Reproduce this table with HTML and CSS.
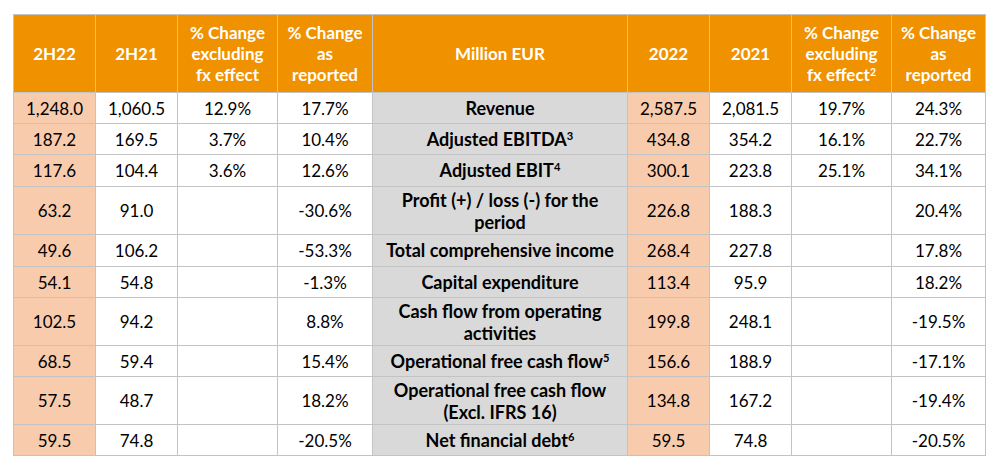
FILE: index.html
```html
<!DOCTYPE html>
<html>
<head>
<meta charset="utf-8">
<link rel="stylesheet" href="styles.css">
</head>
<body>
<div class="wrap">
<table class="fin">
<colgroup>
<col class="c-num"><col class="c-num"><col class="c-fx"><col class="c-rep">
<col class="c-label">
<col class="c-num"><col class="c-num"><col class="c-fx"><col class="c-rep2">
</colgroup>
<thead>
<tr>
<th>2H22</th><th>2H21</th><th>% Change<br>excluding<br>fx effect</th><th>% Change<br>as<br>reported</th>
<th>Million EUR</th>
<th>2022</th><th>2021</th><th>% Change<br>excluding<br>fx effect<sup>2</sup></th><th>% Change<br>as<br>reported</th>
</tr>
</thead>
<tbody>
<tr class="r1"><td class="hl">1,248.0</td><td>1,060.5</td><td>12.9%</td><td>17.7%</td><td class="lbl">Revenue</td><td class="hl">2,587.5</td><td>2,081.5</td><td>19.7%</td><td>24.3%</td></tr>
<tr class="r1"><td class="hl">187.2</td><td>169.5</td><td>3.7%</td><td>10.4%</td><td class="lbl">Adjusted EBITDA<sup>3</sup></td><td class="hl">434.8</td><td>354.2</td><td>16.1%</td><td>22.7%</td></tr>
<tr class="r1b"><td class="hl">117.6</td><td>104.4</td><td>3.6%</td><td>12.6%</td><td class="lbl">Adjusted EBIT<sup>4</sup></td><td class="hl">300.1</td><td>223.8</td><td>25.1%</td><td>34.1%</td></tr>
<tr class="r2"><td class="hl">63.2</td><td>91.0</td><td></td><td>-30.6%</td><td class="lbl">Profit (+) / loss (-) for the period</td><td class="hl">226.8</td><td>188.3</td><td></td><td>20.4%</td></tr>
<tr class="r1b"><td class="hl">49.6</td><td>106.2</td><td></td><td>-53.3%</td><td class="lbl">Total comprehensive income</td><td class="hl">268.4</td><td>227.8</td><td></td><td>17.8%</td></tr>
<tr class="r1"><td class="hl">54.1</td><td>54.8</td><td></td><td>-1.3%</td><td class="lbl">Capital expenditure</td><td class="hl">113.4</td><td>95.9</td><td></td><td>18.2%</td></tr>
<tr class="r2"><td class="hl">102.5</td><td>94.2</td><td></td><td>8.8%</td><td class="lbl">Cash flow from operating activities</td><td class="hl">199.8</td><td>248.1</td><td></td><td>-19.5%</td></tr>
<tr class="r1"><td class="hl">68.5</td><td>59.4</td><td></td><td>15.4%</td><td class="lbl">Operational free cash flow<sup>5</sup></td><td class="hl">156.6</td><td>188.9</td><td></td><td>-17.1%</td></tr>
<tr class="r2"><td class="hl">57.5</td><td>48.7</td><td></td><td>18.2%</td><td class="lbl">Operational free cash flow (Excl. IFRS 16)</td><td class="hl">134.8</td><td>167.2</td><td></td><td>-19.4%</td></tr>
<tr class="r1"><td class="hl">59.5</td><td>74.8</td><td></td><td>-20.5%</td><td class="lbl">Net financial debt<sup>6</sup></td><td class="hl">59.5</td><td>74.8</td><td></td><td>-20.5%</td></tr>
</tbody>
</table>
</div>
</body>
</html>
```
FILE: styles.css
```css
html, body {
  margin: 0;
  padding: 0;
  background: #ffffff;
}
.wrap {
  padding: 14px 0 0 13px;
}
.fin {
  border-collapse: collapse;
  table-layout: fixed;
  width: 973px;
  font-family: Lato, "Open Sans", sans-serif;
  font-size: 17px;
  color: #000000;
}
.c-num { width: 82px; }
.c-fx { width: 100px; }
.c-rep { width: 95px; }
.c-label { width: 255px; }
.c-rep2 { width: 94px; }
.fin th, .fin td {
  border: 1px solid #c3c3c3;
  text-align: center;
  vertical-align: middle;
  padding: 0 4px;
  line-height: 21px;
}
.fin th {
  background: #f09100;
  color: #ffffff;
  font-weight: 700;
  height: 77px;
  padding: 0 2px;
}
.fin td {
  background: #ffffff;
}
.fin td.hl {
  background: #f8cbad;
}
.fin td.lbl {
  background: #d9d9d9;
  font-weight: 700;
  font-size: 18px;
  padding: 0 6px;
}
.fin tr.r1 td { height: 30px; }
.fin tr.r1b td { height: 31px; }
.fin tr.r2 td { height: 47px; line-height: 22px; }
.fin sup {
  font-size: 0.62em;
  line-height: 0;
  vertical-align: 0.5em;
}
```
